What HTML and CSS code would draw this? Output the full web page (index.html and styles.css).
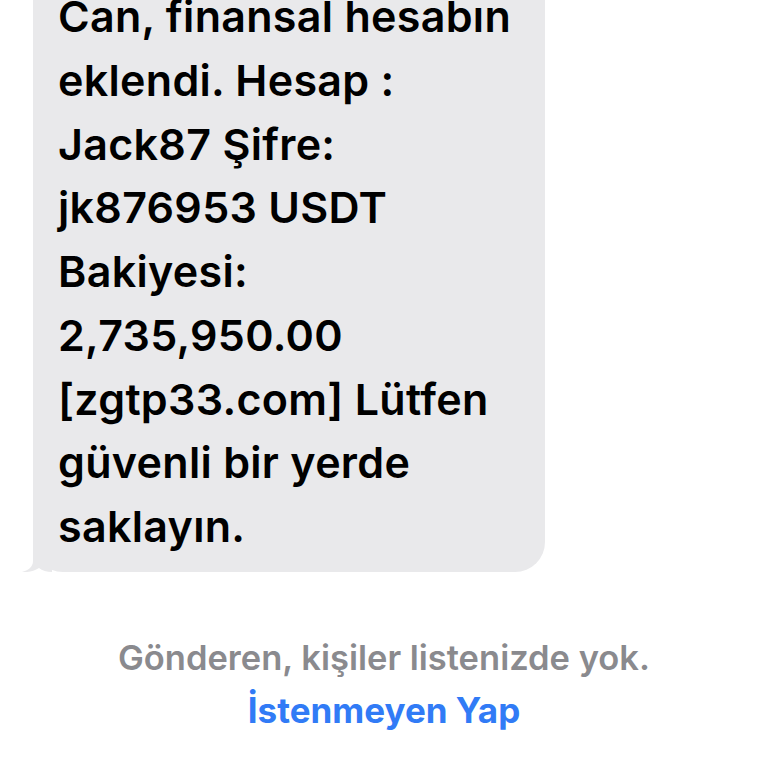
FILE: index.html
```html
<!DOCTYPE html>
<html lang="tr">
<head>
<meta charset="utf-8">
<link rel="stylesheet" href="styles.css">
</head>
<body>
<main class="thread">
  <div class="bubble">
    <p class="msg">Can, finansal hesabın<br>eklendi. Hesap :<br>Jack87 Şifre:<br>jk876953 USDT<br>Bakiyesi:<br>2,735,950.00<br>[zgtp33.com] Lütfen<br>güvenli bir yerde<br>saklayın.</p>
    <svg class="tail" width="30" height="30" viewBox="0 0 30 30"><path d="M11 0 L11 19 C11 25 6 28.5 0 30 C6 30.6 12 29 17 26 C20 28.5 25 30 30 30 L30 0 Z" fill="#e9e9eb"/></svg>
  </div>
  <div class="notice">
    <p class="notice-text">Gönderen, kişiler listenizde yok.</p>
    <p class="notice-link">İstenmeyen Yap</p>
  </div>
</main>
</body>
</html>
```
FILE: styles.css
```css
html, body {
  margin: 0;
  padding: 0;
  background: #ffffff;
}
body {
  font-family: Inter, "Noto Sans", "Liberation Sans", sans-serif;
  width: 768px;
  height: 768px;
  overflow: hidden;
}
.thread {
  display: flex;
  flex-direction: column;
}
.bubble {
  position: relative;
  align-self: flex-start;
  margin-left: 33px;
  margin-top: -41px;
  width: 512px;
  box-sizing: border-box;
  padding: 26px 10px 13px 25px;
  background: #e9e9eb;
  border-radius: 30px;
}
.msg {
  margin: 0;
  font-size: 43px;
  font-weight: 600;
  line-height: 63.75px;
  color: #000;
  letter-spacing: 0.3px;
  white-space: nowrap;
}
.tail {
  position: absolute;
  left: -11px;
  bottom: 0;
}
.notice {
  display: flex;
  flex-direction: column;
  align-items: center;
  margin-top: 60px;
}
.notice p {
  margin: 0;
  line-height: 52px;
}
.notice-text {
  color: #8a8a8e;
  font-weight: 600;
  font-size: 34.5px;
}
.notice-link {
  color: #317bf6;
  font-weight: 700;
  font-size: 35px;
}
```
